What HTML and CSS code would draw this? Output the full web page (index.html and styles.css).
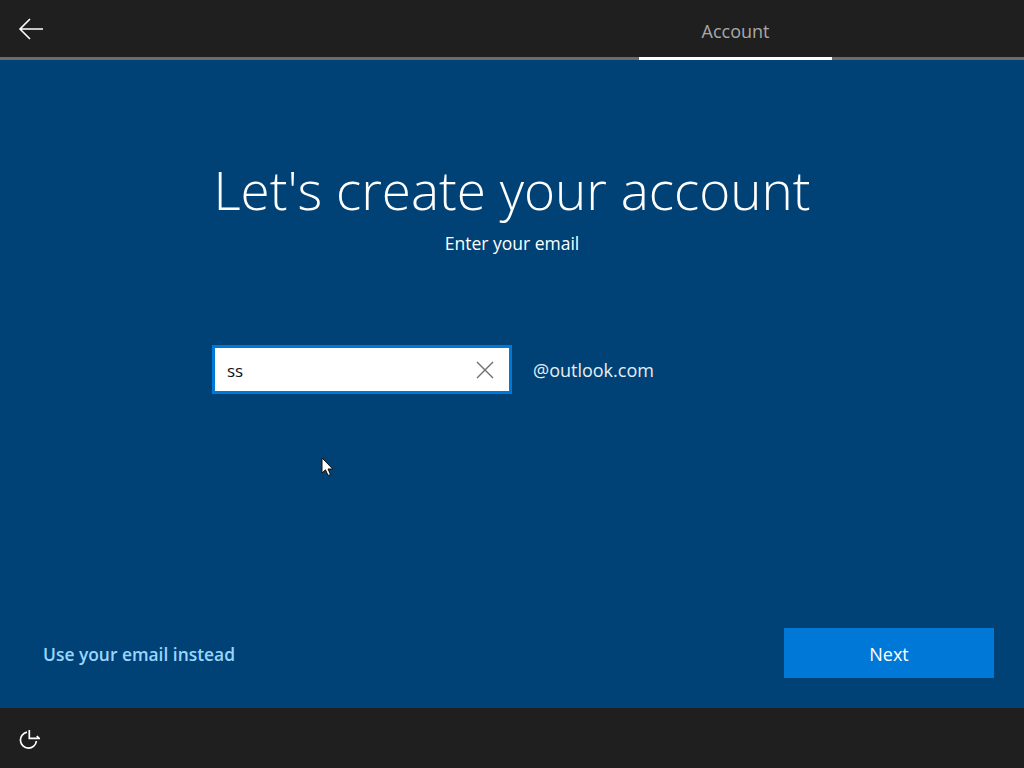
FILE: index.html
```html
<!DOCTYPE html>
<html lang="en">
<head>
    <meta charset="UTF-8">
    <meta name="viewport" content="width=device-width, initial-scale=1.0">
    <title>Account</title>
    <link rel="stylesheet" href="styles.css">
</head>
<body>
    <div class="page">
        <header class="topbar">
            <svg class="back-icon" width="26" height="22" viewBox="0 0 26 22" fill="none" stroke="#fff" stroke-width="1.6">
                <path d="M12 1 L2 11 L12 21 M2 11 H25"/>
            </svg>
            <div class="tab">Account</div>
        </header>

        <main class="content">
            <h1>Let's create your account</h1>
            <p class="subtitle">Enter your email</p>

            <div class="email-row">
                <div class="email-box">
                    <span class="email-value">ss</span>
                    <svg width="18" height="18" viewBox="0 0 18 18" fill="none" stroke="#6f6f6f" stroke-width="1.4">
                        <path d="M1 1 L17 17 M17 1 L1 17"/>
                    </svg>
                </div>
                <span class="domain">@outlook.com</span>
            </div>

            <div class="actions">
                <a class="alt-link">Use your email instead</a>
                <button class="next-btn">Next</button>
            </div>

            <svg class="cursor" width="13" height="20" viewBox="0 0 13 20">
                <path d="M1 1 V16 L4.5 12.8 L7 18.5 L9.5 17.4 L7 12 H11.8 Z" fill="#fff" stroke="#111" stroke-width="1"/>
            </svg>
        </main>

        <footer class="bottombar">
            <svg width="22" height="22" viewBox="0 0 22 22" fill="none" stroke="#fff" stroke-width="1.7">
                <path d="M9 5.2 A8 8 0 1 0 18.4 14 M11.3 3 V11.3 H21 L18.8 9"/>
            </svg>
        </footer>
    </div>
</body>
</html>
```

FILE: styles.css
```css
* {
    margin: 0;
    padding: 0;
    box-sizing: border-box;
}

body {
    font-family: "Open Sans", "Noto Sans", sans-serif;
    background-color: #004275;
    color: white;
}

.page {
    width: 1024px;
    height: 768px;
    display: flex;
    flex-direction: column;
    overflow: hidden;
}

.topbar {
    height: 60px;
    background-color: #1f1f1f;
    border-bottom: 3px solid #6b6b6b;
    display: flex;
    align-items: center;
    justify-content: space-between;
    padding: 0 192px 0 18px;
}

.back-icon {
    margin-top: 1px;
}

.tab {
    width: 193px;
    height: 60px;
    margin-bottom: -3px;
    padding-top: 19px;
    border-bottom: 3px solid white;
    text-align: center;
    font-size: 18px;
    color: #a8a8a8;
}

.content {
    flex: 1;
    position: relative;
    display: flex;
    flex-direction: column;
    align-items: center;
    padding-top: 94px;
}

h1 {
    font-size: 53px;
    font-weight: 300;
    line-height: 72px;
}

.subtitle {
    font-size: 17.5px;
    line-height: 24px;
    margin-top: 5px;
}

.email-row {
    align-self: flex-start;
    display: flex;
    align-items: center;
    gap: 21px;
    margin: 90px 0 0 212px;
}

.email-box {
    width: 300px;
    height: 49px;
    background-color: white;
    border: 3px solid #0078d7;
    display: flex;
    align-items: center;
    justify-content: space-between;
    padding: 0 15px 0 12px;
}

.email-value {
    font-size: 17px;
    color: #111;
    margin-top: 1px;
}

.domain {
    font-size: 18px;
    color: #e6eef5;
}

.actions {
    align-self: stretch;
    margin-top: auto;
    margin-bottom: 30px;
    padding: 0 30px 0 43px;
    display: flex;
    align-items: center;
    justify-content: space-between;
}

.alt-link {
    font-size: 17.4px;
    font-weight: 600;
    color: #99d6ff;
    margin-top: 2px;
}

.next-btn {
    width: 210px;
    height: 50px;
    border: none;
    padding-top: 2px;
    background-color: #0078d7;
    color: white;
    font-family: inherit;
    font-size: 18px;
}

.cursor {
    position: absolute;
    left: 321px;
    top: 397px;
}

.bottombar {
    height: 60px;
    background-color: #1f1f1f;
    display: flex;
    align-items: center;
    padding-left: 18px;
}
```
